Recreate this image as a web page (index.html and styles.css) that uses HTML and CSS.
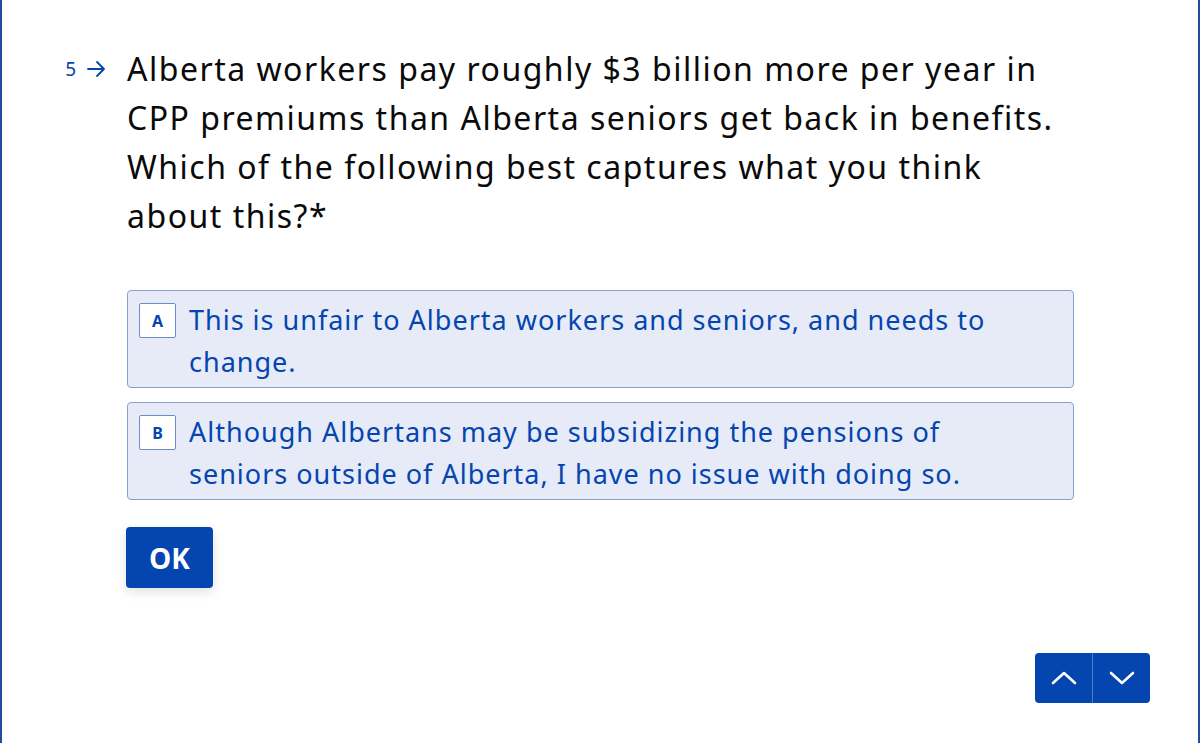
FILE: index.html
```html
<!DOCTYPE html>
<html>
<head>
<meta charset="utf-8">
<link rel="stylesheet" href="styles.css">
</head>
<body>
<div class="frame">
  <div class="question">
    <div class="qnum"><span>5</span><svg class="arrow" width="20" height="18" viewBox="0 0 20 18"><path d="M2 9H18M11 2L18 9L11 16" fill="none" stroke="#0445af" stroke-width="1.8" stroke-linecap="round" stroke-linejoin="round"/></svg></div>
    <div class="qbody">
      <h1 class="qtext">Alberta workers pay roughly $3 billion more per year in CPP premiums than Alberta seniors get back in benefits. Which of the following best captures what you think about this?*</h1>
      <div class="options">
        <div class="option"><span class="key">A</span><span class="label">This is unfair to Alberta workers and seniors, and needs to change.</span></div>
        <div class="option"><span class="key">B</span><span class="label">Although Albertans may be subsidizing the pensions of<br>seniors outside of Alberta, I have no issue with doing so.</span></div>
      </div>
      <button class="ok">OK</button>
    </div>
  </div>
  <div class="nav">
    <button class="navbtn up"><svg width="26" height="16" viewBox="0 0 26 16"><path d="M2 13L13 3L24 13" fill="none" stroke="#fff" stroke-width="2.6" stroke-linecap="round" stroke-linejoin="round"/></svg></button>
    <button class="navbtn down"><svg width="26" height="16" viewBox="0 0 26 16"><path d="M2 3L13 13L24 3" fill="none" stroke="#fff" stroke-width="2.6" stroke-linecap="round" stroke-linejoin="round"/></svg></button>
  </div>
</div>
</body>
</html>
```
FILE: styles.css
```css
* { box-sizing: border-box; }
html, body { margin: 0; padding: 0; background: #fff; }
body { font-family: "Noto Sans", "Open Sans", sans-serif; }
.frame {
  width: 1200px;
  height: 743px;
  border-left: 2px solid #1d4f9c;
  border-right: 2px solid #1d4f9c;
  display: flex;
  flex-direction: column;
  justify-content: space-between;
  padding: 44px 48px 40px 0;
}
.question { display: flex; }
.qnum {
  width: 125px;
  display: flex;
  justify-content: flex-end;
  align-items: center;
  gap: 10px;
  padding-right: 21px;
  height: 49px;
  color: #0445af;
  font-size: 19px;
}
.arrow { margin-top: 1px; }
.qbody { width: 947px; }
.qtext {
  margin: 0;
  font-weight: 400;
  font-size: 32px;
  line-height: 49px;
  color: #0a0a0a;
  letter-spacing: 1.5px;
}
.options {
  margin-top: 50px;
  display: flex;
  flex-direction: column;
  gap: 14px;
}
.option {
  display: flex;
  align-items: flex-start;
  background: #e6ebf7;
  border: 1px solid #86a0d6;
  border-radius: 4px;
  padding: 8px 12px 4px 11px;
  color: #0445af;
}
.key {
  flex: none;
  width: 37px;
  height: 35px;
  margin-top: 4px;
  margin-right: 13px;
  background: #fff;
  border: 1px solid #6e8ccc;
  border-radius: 2px;
  display: flex;
  align-items: center;
  justify-content: center;
  font-size: 16px;
  font-weight: 700;
}
.label {
  max-width: 840px;
  font-size: 27px;
  line-height: 42px;
  letter-spacing: 1px;
}
.ok {
  margin-top: 27px;
  width: 87px;
  height: 61px;
  border: 0;
  border-radius: 4px;
  background: #0445af;
  color: #fff;
  font-family: "Open Sans", "Noto Sans", sans-serif;
  font-weight: 700;
  font-size: 28px;
  box-shadow: 0 4px 12px rgba(0, 0, 0, 0.12);
  margin-left: -1px;
}
.nav {
  align-self: flex-end;
  display: flex;
  border-radius: 4px;
  overflow: hidden;
}
.navbtn {
  width: 57px;
  height: 50px;
  border: 0;
  background: #0445af;
  display: flex;
  align-items: center;
  justify-content: center;
  padding: 0;
}
.navbtn.up { border-right: 1px solid #4f7cc8; width: 58px; }
```
